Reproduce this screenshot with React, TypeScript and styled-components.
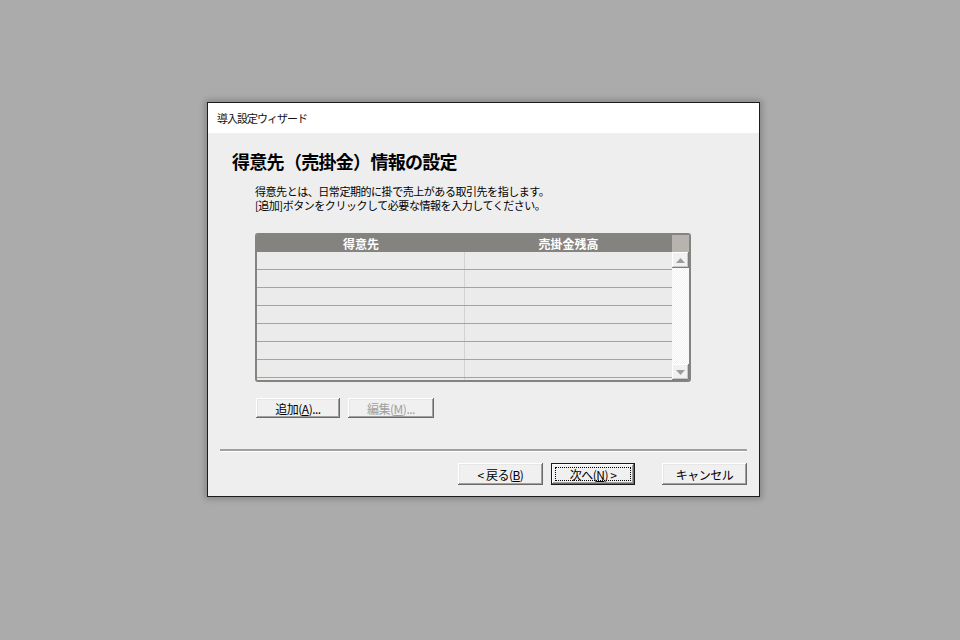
import React from "react";
import styled, { createGlobalStyle } from "styled-components";

const Global = createGlobalStyle`
  html, body { margin: 0; padding: 0; }
  body { background: #ababab; font-family: "Noto Sans CJK JP", "Noto Sans", sans-serif; }
`;

const Page = styled.div`
  width: 960px;
  height: 640px;
  box-sizing: border-box;
  padding: 102px 0 0 207px;
  background: #ababab;
`;

const Dialog = styled.div`
  width: 553px;
  height: 395px;
  box-sizing: border-box;
  border: 1px solid #1c1c1c;
  background: #eeeeee;
  box-shadow: 0 0 6px 2px rgba(0, 0, 0, 0.22);
  display: flex;
  flex-direction: column;
`;

const TitleBar = styled.div`
  height: 30px;
  flex: none;
  background: #ffffff;
  display: flex;
  align-items: center;
  padding-left: 9px;
  font-size: 11px;
  letter-spacing: -1px;
  color: #111;
`;

const Body = styled.div`
  flex: 1;
  display: flex;
  flex-direction: column;
  padding: 0 12px 10px 12px;
`;

const Heading = styled.h1`
  margin: 16px 0 0 12px;
  font-size: 18px;
  line-height: 24px;
  font-weight: 700;
  letter-spacing: -0.7px;
  color: #000;
`;

const Description = styled.p`
  margin: 11px 0 0 35px;
  font-size: 11px;
  line-height: 14px;
  letter-spacing: -0.45px;
  color: #000;
`;

const TableFrame = styled.div`
  margin: 21px 0 0 35px;
  width: 436px;
  height: 149px;
  box-sizing: border-box;
  border: 2px solid #858380;
  border-radius: 3px;
  display: flex;
  overflow: hidden;
  background: #ecebeb;
`;

const Grid = styled.div`
  flex: 1;
  display: flex;
  flex-direction: column;
  overflow: hidden;
`;

const HeaderRow = styled.div`
  flex: none;
  height: 17px;
  display: grid;
  grid-template-columns: 208px 1fr;
  background: #858380;
`;

const HeaderCell = styled.div`
  display: flex;
  align-items: center;
  justify-content: center;
  color: #ffffff;
  font-size: 12px;
  font-weight: 700;
  line-height: 17px;
`;

const Row = styled.div`
  flex: none;
  height: 18px;
  box-sizing: border-box;
  display: grid;
  grid-template-columns: 208px 1fr;
  border-bottom: 1px solid #a3a3a3;
  background: #ecebeb;
`;

const Cell = styled.div<{ $divider?: boolean }>`
  border-right: ${(p) => (p.$divider ? "1px solid #d2d2d2" : "none")};
`;

const ScrollBar = styled.div`
  width: 17px;
  flex: none;
  display: flex;
  flex-direction: column;
  background: repeating-conic-gradient(#ffffff 0 25%, #f2f2f2 0 50%) 0 0 / 2px 2px;
`;

const Corner = styled.div`
  height: 17px;
  flex: none;
  background: #b7b4af;
`;

const ArrowButton = styled.div`
  height: 16px;
  flex: none;
  box-sizing: border-box;
  background: #f1f1f1;
  box-shadow: inset -1px -1px #7c7c7c, inset 1px 1px #ffffff, inset -2px -2px #c8c8c8;
  display: flex;
  align-items: center;
  justify-content: center;
`;

const Track = styled.div`
  flex: 1;
`;

const ButtonRow = styled.div`
  margin: 16px 0 0 36px;
  display: flex;
  gap: 8px;
`;

const Button = styled.button<{ $w: number; $h: number; $default?: boolean }>`
  width: ${(p) => p.$w}px;
  height: ${(p) => p.$h}px;
  padding: 0;
  box-sizing: border-box;
  border: ${(p) => (p.$default ? "1px solid #1a1a1a" : "none")};
  background: #f0f0f0;
  box-shadow: ${(p) =>
    p.$default
      ? "inset -1px -1px #6a6a6a, inset 1px 1px #ffffff, inset -2px -2px #a0a0a0"
      : "inset -1px -1px #6a6a6a, inset 1px 1px #ffffff, inset -2px -2px #a0a0a0, inset 2px 2px #e6e6e6"};
  font-family: "Noto Sans CJK JP", "Noto Sans", sans-serif;
  font-size: 12px;
  letter-spacing: -0.5px;
  white-space: pre;
  color: ${(p) => (p.disabled ? "#a0a0a0" : "#000")};
  display: flex;
  align-items: center;
  justify-content: center;
  position: relative;
`;

const FocusRect = styled.span`
  position: absolute;
  inset: 3px;
  border: 1px dotted #000;
`;

const Separator = styled.div`
  margin-top: 31px;
  height: 0;
  border-top: 2px solid #a0a0a0;
  border-bottom: 1px solid #ffffff;
`;

const Footer = styled.div`
  margin-top: 11px;
  display: flex;
  justify-content: flex-end;
  gap: 8px;
`;

const Spacer = styled.div`
  width: 11px;
`;

const U = styled.span`
  text-decoration: underline;
`;

const Up = () => (
  <svg width="9" height="5" viewBox="0 0 9 5">
    <path d="M0 5 L4.5 0 L9 5 Z" fill="#9c9c9c" />
  </svg>
);
const Down = () => (
  <svg width="9" height="5" viewBox="0 0 9 5">
    <path d="M0 0 L4.5 5 L9 0 Z" fill="#9c9c9c" />
  </svg>
);

export default function App() {
  const rows = Array.from({ length: 8 });
  return (
    <>
      <Global />
      <Page>
        <Dialog>
          <TitleBar>導入設定ウィザード</TitleBar>
          <Body>
            <Heading>得意先（売掛金）情報の設定</Heading>
            <Description>
              得意先とは、日常定期的に掛で売上がある取引先を指します。
              <br />
              [追加]ボタンをクリックして必要な情報を入力してください。
            </Description>
            <TableFrame>
              <Grid>
                <HeaderRow>
                  <HeaderCell>得意先</HeaderCell>
                  <HeaderCell>売掛金残高</HeaderCell>
                </HeaderRow>
                {rows.map((_, i) => (
                  <Row key={i}>
                    <Cell $divider />
                    <Cell />
                  </Row>
                ))}
              </Grid>
              <ScrollBar>
                <Corner />
                <ArrowButton>
                  <Up />
                </ArrowButton>
                <Track />
                <ArrowButton>
                  <Down />
                </ArrowButton>
              </ScrollBar>
            </TableFrame>
            <ButtonRow>
              <Button $w={84} $h={20}>
                追加(<U>A</U>)...
              </Button>
              <Button $w={86} $h={20} disabled>
                編集(<U>M</U>)...
              </Button>
            </ButtonRow>
            <Separator />
            <Footer>
              <Button $w={85} $h={22}>
                {"< 戻る("}<U>B</U>{")"}
              </Button>
              <Button $w={84} $h={22} $default>
                <FocusRect />
                {"次へ("}<U>N</U>{") >"}
              </Button>
              <Spacer />
              <Button $w={85} $h={22}>
                キャンセル
              </Button>
            </Footer>
          </Body>
        </Dialog>
      </Page>
    </>
  );
}
